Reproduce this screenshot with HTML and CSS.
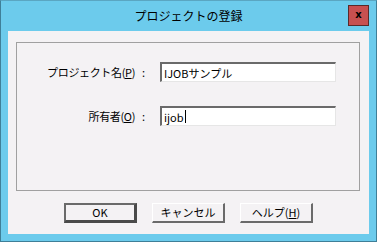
FILE: index.html
```html
<!DOCTYPE html>
<html lang="ja">
<head>
<meta charset="utf-8">
<link rel="stylesheet" href="styles.css">
</head>
<body>
<div class="window">
  <div class="titlebar">
    <div class="title">プロジェクトの登録</div>
    <div class="close">x</div>
  </div>
  <div class="client">
    <div class="group">
      <div class="form">
        <div class="label">プロジェクト名(<u>P</u>)</div>
        <div class="colon">:</div>
        <div class="field">IJOBサンプル</div>
        <div class="label">所有者(<u>O</u>)</div>
        <div class="colon">:</div>
        <div class="field">ijob<span class="caret"></span></div>
      </div>
    </div>
    <div class="buttons">
      <div class="btn default">OK</div>
      <div class="btn">キャンセル</div>
      <div class="btn">ヘルプ(<u>H</u>)</div>
    </div>
  </div>
</div>
</body>
</html>
```
FILE: styles.css
```css
html, body {
  margin: 0;
  padding: 0;
  background: #6ccbec;
}
body {
  font-family: "Noto Sans CJK JP", "Liberation Sans", sans-serif;
  font-size: 11px;
  color: #000;
}
.window {
  width: 377px;
  height: 242px;
  box-sizing: border-box;
  border: 1px solid #3f7f98;
  border-top-color: #5aa6c2;
  background: #6ccbec;
  display: flex;
  flex-direction: column;
}
.titlebar {
  height: 30px;
  position: relative;
  display: flex;
  align-items: center;
  justify-content: center;
}
.title {
  font-size: 12px;
  line-height: 14px;
  color: #000;
}
.close {
  position: absolute;
  left: 347px;
  top: 4px;
  width: 19px;
  height: 19px;
  background: #c75050;
  border: 1px solid #5a2a2a;
  font-family: "DejaVu Sans", sans-serif;
  font-weight: bold;
  font-size: 10px;
  line-height: 17px;
  text-align: center;
  color: #000;
}
.client {
  margin: 0 7px 7px 7px;
  flex: 1;
  background: #f4f2f4;
  padding: 11px 9px 0 8px;
  display: flex;
  flex-direction: column;
}
.group {
  height: 149px;
  box-sizing: border-box;
  border: 1px solid #a0a0a0;
  padding-top: 19px;
}
.form {
  display: grid;
  grid-template-columns: 118px 25px 176px;
  grid-auto-rows: 20px;
  row-gap: 24px;
  align-items: center;
}
.label {
  text-align: right;
  white-space: nowrap;
  line-height: 14px;
  letter-spacing: -0.35px;
}
.colon {
  padding-left: 7px;
  line-height: 14px;
}
.field {
  height: 20px;
  box-sizing: border-box;
  background: #fff;
  border-style: solid;
  border-width: 2px 1px 1px 2px;
  border-color: #6a6a6a #e6e6e6 #e6e6e6 #6a6a6a;
  padding-left: 2px;
  line-height: 16px;
  white-space: nowrap;
  display: flex;
  align-items: center;
}
.caret {
  display: inline-block;
  width: 1px;
  height: 13px;
  background: #000;
  margin-left: 1px;
}
.buttons {
  margin-top: 12px;
  display: flex;
  justify-content: center;
  gap: 15px;
  padding-left: 1px;
}
.btn {
  width: 73px;
  height: 20px;
  box-sizing: border-box;
  background: #f4f2f4;
  border-style: solid;
  border-width: 1px 2px 2px 1px;
  border-color: #ffffff #6a6a6a #6a6a6a #ffffff;
  text-align: center;
  line-height: 17px;
}
.btn.default {
  border-width: 2px 3px 3px 2px;
  border-color: #6a6a6a #4a4a4a #4a4a4a #6a6a6a;
  line-height: 15px;
}
u {
  text-decoration: underline;
  text-underline-offset: 1px;
}
```
